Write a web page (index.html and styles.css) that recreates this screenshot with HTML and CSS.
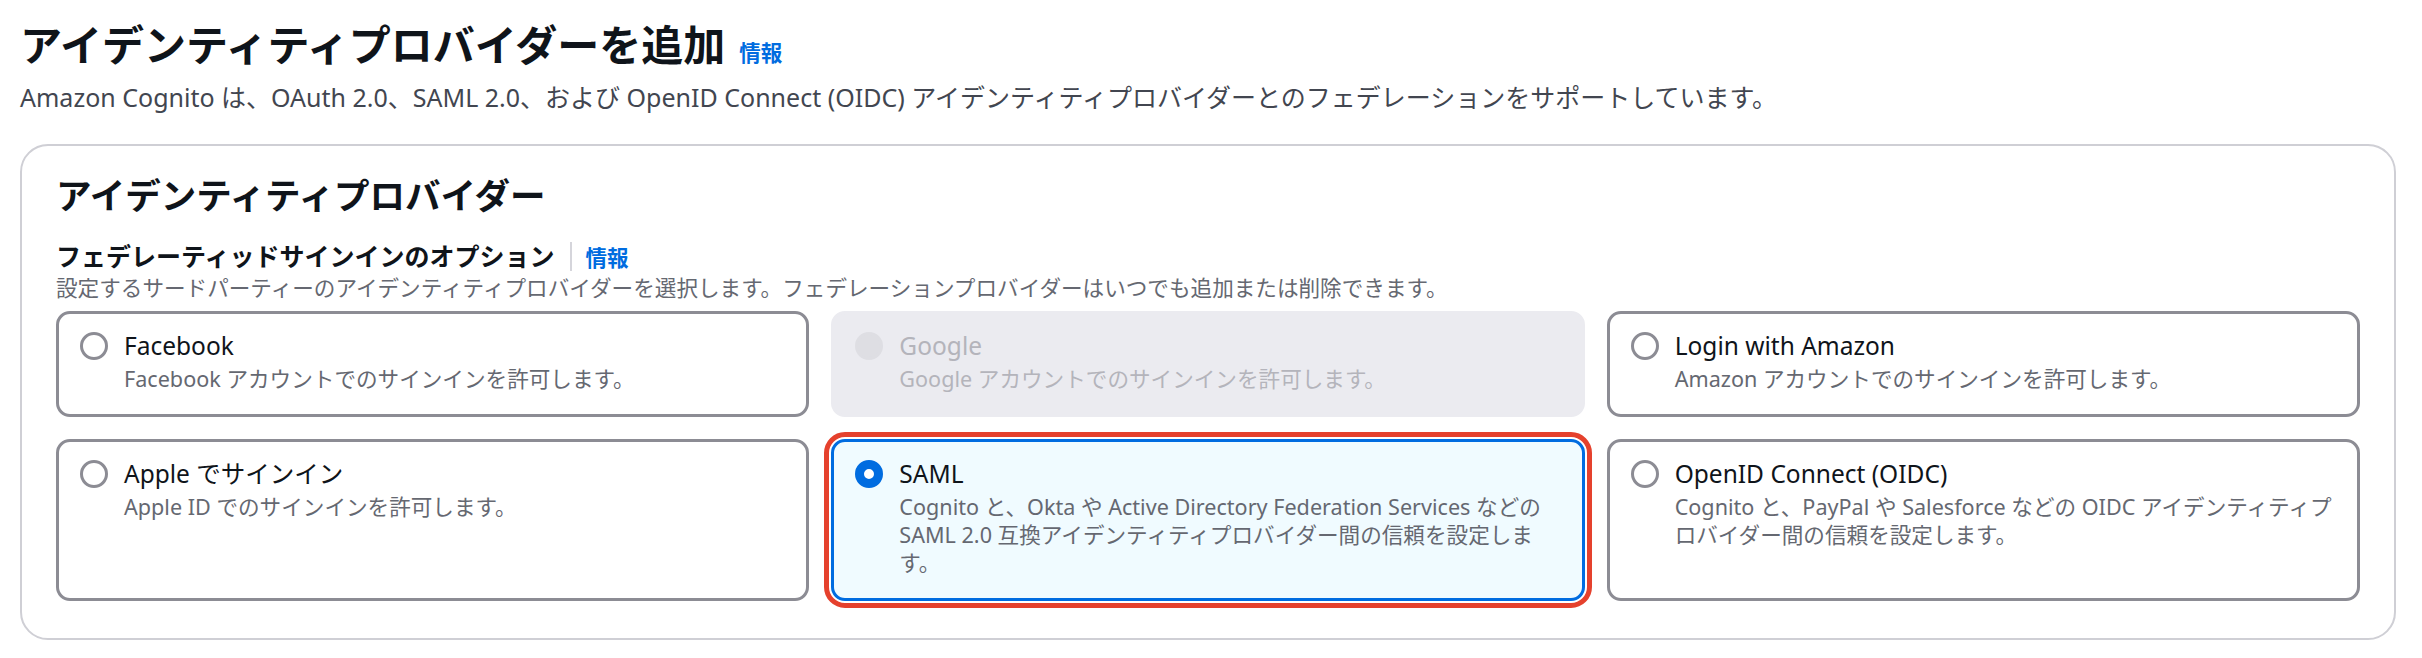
FILE: index.html
```html
<!DOCTYPE html>
<html lang="ja">
<head>
<meta charset="utf-8">
<title>アイデンティティプロバイダーを追加</title>
<link rel="stylesheet" href="styles.css">
</head>
<body>
<div class="page">
  <div class="page-title-row">
    <h1 class="page-title">アイデンティティプロバイダーを追加</h1>
    <a class="info-link" href="#">情報</a>
  </div>
  <p class="page-desc">Amazon Cognito は、OAuth 2.0、SAML 2.0、および OpenID Connect (OIDC) アイデンティティプロバイダーとのフェデレーションをサポートしています。</p>

  <section class="container">
    <h2 class="container-title">アイデンティティプロバイダー</h2>
    <div class="field-label-row">
      <span class="field-label">フェデレーティッドサインインのオプション</span>
      <span class="label-divider"></span>
      <a class="info-link" href="#">情報</a>
    </div>
    <p class="field-desc">設定するサードパーティーのアイデンティティプロバイダーを選択します。フェデレーションプロバイダーはいつでも追加または削除できます。</p>

    <div class="tiles">
      <div class="tile">
        <div class="radio-box"><span class="radio"></span></div>
        <div class="tile-text">
          <div class="tile-title">Facebook</div>
          <div class="tile-desc">Facebook アカウントでのサインインを許可します。</div>
        </div>
      </div>
      <div class="tile tile-disabled">
        <div class="radio-box"><span class="radio"></span></div>
        <div class="tile-text">
          <div class="tile-title">Google</div>
          <div class="tile-desc">Google アカウントでのサインインを許可します。</div>
        </div>
      </div>
      <div class="tile">
        <div class="radio-box"><span class="radio"></span></div>
        <div class="tile-text">
          <div class="tile-title">Login with Amazon</div>
          <div class="tile-desc">Amazon アカウントでのサインインを許可します。</div>
        </div>
      </div>
      <div class="tile">
        <div class="radio-box"><span class="radio"></span></div>
        <div class="tile-text">
          <div class="tile-title">Apple でサインイン</div>
          <div class="tile-desc">Apple ID でのサインインを許可します。</div>
        </div>
      </div>
      <div class="tile tile-selected">
        <div class="radio-box"><span class="radio"></span></div>
        <div class="tile-text">
          <div class="tile-title">SAML</div>
          <div class="tile-desc">Cognito と、Okta や Active Directory Federation Services などの SAML 2.0 互換アイデンティティプロバイダー間の信頼を設定します。</div>
        </div>
      </div>
      <div class="tile">
        <div class="radio-box"><span class="radio"></span></div>
        <div class="tile-text">
          <div class="tile-title">OpenID Connect (OIDC)</div>
          <div class="tile-desc">Cognito と、PayPal や Salesforce などの OIDC アイデンティティプロバイダー間の信頼を設定します。</div>
        </div>
      </div>
    </div>
  </section>
</div>
</body>
</html>
```
FILE: styles.css
```css
* { box-sizing: border-box; }

html, body {
  margin: 0;
  padding: 0;
  background: #ffffff;
}

body {
  font-family: "Noto Sans", "Noto Sans CJK JP", sans-serif;
  color: #0f141a;
}

.page {
  padding: 19px 26px 0 20px;
}

.page-title-row {
  display: flex;
  align-items: baseline;
  gap: 14px;
}

.page-title {
  margin: 0;
  font-size: 42px;
  line-height: 52px;
  font-weight: 700;
  color: #0f141a;
}

.info-link {
  font-size: 21.5px;
  font-weight: 700;
  color: #006ce0;
  text-decoration: none;
}

.page-desc {
  margin: 7px 0 0 0;
  font-size: 25px;
  line-height: 38px;
  color: #424650;
}

.container {
  margin-top: 28px;
  border: 2px solid #cfcfd5;
  border-radius: 28px;
  padding: 28px 34px 37px 34px;
}

.container-title {
  margin: 0;
  font-size: 35.5px;
  line-height: 42px;
  font-weight: 700;
  color: #0f141a;
}

.field-label-row {
  margin-top: 22px;
  display: flex;
  align-items: center;
  height: 36px;
}

.field-label {
  font-size: 25px;
  line-height: 36px;
  font-weight: 700;
  color: #0f141a;
}

.label-divider {
  width: 2px;
  height: 29px;
  background: #d5d5db;
  margin: 0 14px 0 15px;
}

.field-desc {
  margin: 0;
  font-size: 21.6px;
  line-height: 28px;
  color: #656871;
}

.tiles {
  margin-top: 9px;
  display: grid;
  grid-template-columns: repeat(3, 1fr);
  gap: 22px;
}

.tile {
  display: flex;
  gap: 16px;
  border: 3px solid #8c8c94;
  border-radius: 14px;
  padding: 13px 10px 21px 21px;
  background: #ffffff;
}

.radio-box {
  flex: none;
  height: 38px;
  display: flex;
  align-items: center;
}

.radio {
  display: block;
  width: 28px;
  height: 28px;
  border-radius: 50%;
  border: 3.5px solid #8c8c94;
  background: #ffffff;
}

.tile-text {
  flex: 1;
  min-width: 0;
}

.tile-title {
  font-size: 24.5px;
  line-height: 38px;
  color: #0f141a;
}

.tile-desc {
  font-size: 21.6px;
  line-height: 28px;
  color: #656871;
}

.tile-disabled {
  background: #ebebf0;
  border-color: #ebebf0;
}

.tile-disabled .radio {
  background: #dedee3;
  border-color: #dedee3;
}

.tile-disabled .tile-title,
.tile-disabled .tile-desc {
  color: #b4b4bb;
}

.tile-selected {
  background: #f0fbff;
  border-color: #006ce0;
  outline: 5px solid #e5412d;
  outline-offset: 2px;
}

.tile-selected .radio {
  border: 9px solid #006ce0;
  background: #ffffff;
}
```
